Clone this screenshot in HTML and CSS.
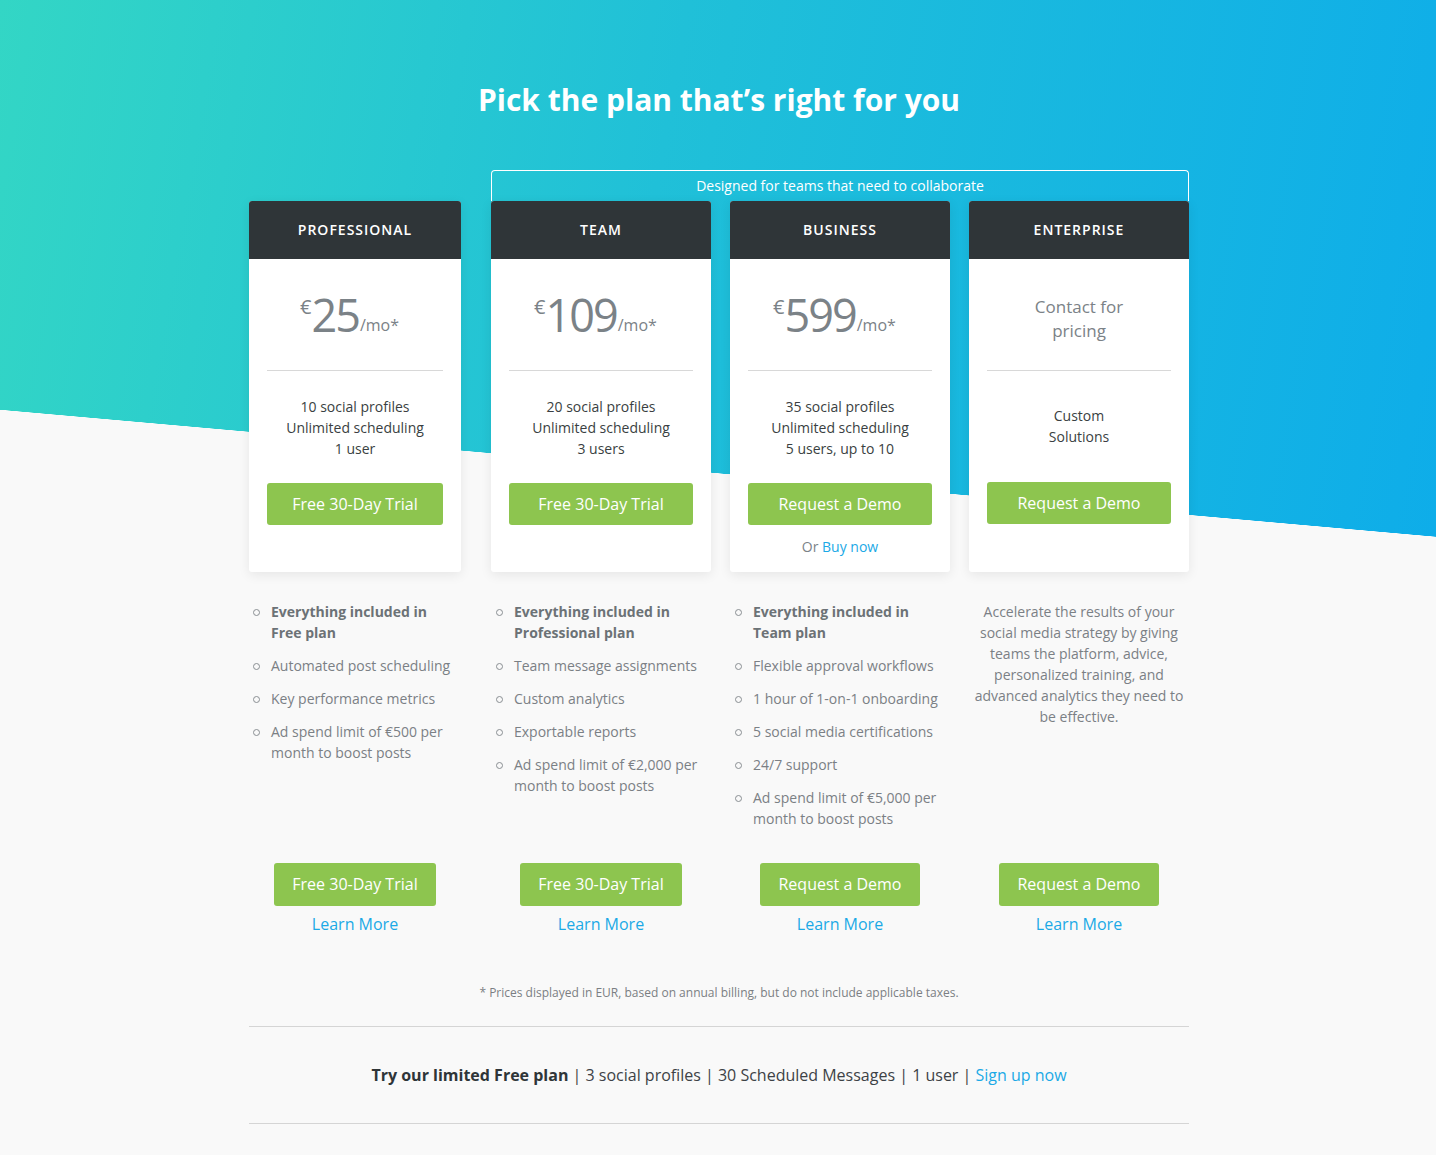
FILE: index.html
```html
<!DOCTYPE html>
<html lang="en">
<head>
<meta charset="utf-8">
<title>Pricing</title>
<link rel="stylesheet" href="styles.css">
</head>
<body>
<div class="page">
  <div class="container">
    <h1 class="title">Pick the plan that’s right for you</h1>

    <div class="plans">
      <div class="banner">Designed for teams that need to collaborate</div>

      <!-- Cards -->
      <div class="card col1">
        <div class="card-head">PROFESSIONAL</div>
        <div class="card-body">
          <div class="price"><span class="cur">€</span><span class="amt">25</span><span class="per">/mo*</span></div>
          <div class="summary">10 social profiles<br>Unlimited scheduling<br>1 user</div>
          <a class="btn btn-block">Free 30-Day Trial</a>
        </div>
      </div>
      <div class="card">
        <div class="card-head">TEAM</div>
        <div class="card-body">
          <div class="price"><span class="cur">€</span><span class="amt">109</span><span class="per">/mo*</span></div>
          <div class="summary">20 social profiles<br>Unlimited scheduling<br>3 users</div>
          <a class="btn btn-block">Free 30-Day Trial</a>
        </div>
      </div>
      <div class="card">
        <div class="card-head">BUSINESS</div>
        <div class="card-body">
          <div class="price"><span class="cur">€</span><span class="amt">599</span><span class="per">/mo*</span></div>
          <div class="summary">35 social profiles<br>Unlimited scheduling<br>5 users, up to 10</div>
          <a class="btn btn-block">Request a Demo</a>
          <div class="or">Or <a class="link">Buy now</a></div>
        </div>
      </div>
      <div class="card">
        <div class="card-head">ENTERPRISE</div>
        <div class="card-body">
          <div class="price contact">Contact for<br>pricing</div>
          <div class="summary summary-up">Custom<br>Solutions</div>
          <a class="btn btn-block btn-up">Request a Demo</a>
        </div>
      </div>

      <!-- Feature lists -->
      <ul class="features col1">
        <li class="strong">Everything included in Free plan</li>
        <li>Automated post scheduling</li>
        <li>Key performance metrics</li>
        <li>Ad spend limit of €500 per month to boost posts</li>
      </ul>
      <ul class="features">
        <li class="strong">Everything included in Professional plan</li>
        <li>Team message assignments</li>
        <li>Custom analytics</li>
        <li>Exportable reports</li>
        <li>Ad spend limit of €2,000 per month to boost posts</li>
      </ul>
      <ul class="features">
        <li class="strong">Everything included in Team plan</li>
        <li>Flexible approval workflows</li>
        <li>1 hour of 1-on-1 onboarding</li>
        <li>5 social media certifications</li>
        <li>24/7 support</li>
        <li>Ad spend limit of €5,000 per month to boost posts</li>
      </ul>
      <p class="enterprise-desc">Accelerate the results of your social media strategy by giving teams the platform, advice, personalized training, and advanced analytics they need to be effective.</p>

      <!-- Bottom CTAs -->
      <div class="cta col1"><a class="btn">Free 30-Day Trial</a><a class="learn">Learn More</a></div>
      <div class="cta"><a class="btn">Free 30-Day Trial</a><a class="learn">Learn More</a></div>
      <div class="cta"><a class="btn">Request a Demo</a><a class="learn">Learn More</a></div>
      <div class="cta"><a class="btn">Request a Demo</a><a class="learn">Learn More</a></div>
    </div>

    <p class="footnote">* Prices displayed in EUR, based on annual billing, but do not include applicable taxes.</p>

    <div class="free-plan">
      <strong>Try our limited Free plan</strong> | 3 social profiles | 30 Scheduled Messages | 1 user | <a class="link">Sign up now</a>
    </div>
  </div>
</div>
</body>
</html>
```

FILE: styles.css
```css
* { box-sizing: border-box; }

html, body {
  margin: 0;
  padding: 0;
}

body {
  font-family: "Open Sans", "Liberation Sans", Arial, sans-serif;
  color: #3a3f42;
  background: #f9f9f9;
}

.page {
  min-height: 1155px;
  padding-bottom: 40px;
  background:
    linear-gradient(to top right, #f9f9f9 50%, rgba(249, 249, 249, 0) 50.2%) 0 410px / 100% 127px no-repeat,
    linear-gradient(100deg, #33d6c5 0%, #20c0d8 45%, #0eade9 100%) 0 0 / 100% 537px no-repeat,
    #f9f9f9;
}

.container {
  width: 940px;
  margin: 0 auto;
  position: relative;
  left: 1px;
}

.title {
  margin: 0;
  padding-top: 81px;
  font-size: 30px;
  line-height: 38px;
  font-weight: 700;
  color: #fff;
  text-align: center;
}

.plans {
  margin-top: 51px;
  display: grid;
  grid-template-columns: 223px 220px 220px 220px;
  column-gap: 19px;
}

.col1 { width: 212px; }

.banner {
  grid-column: 2 / 5;
  grid-row: 1;
  height: 31px;
  border: 1px solid #fff;
  border-bottom: none;
  border-radius: 4px 4px 0 0;
  color: #fff;
  font-size: 14px;
  line-height: 30px;
  text-align: center;
}

.card {
  grid-row: 2;
  background: #fff;
  border-radius: 3px;
  box-shadow: 0 3px 12px rgba(0, 0, 0, 0.08);
  display: flex;
  flex-direction: column;
}

.card-head {
  height: 58px;
  background: #2f3538;
  color: #fff;
  border-radius: 3px 3px 0 0;
  font-size: 14px;
  font-weight: 600;
  letter-spacing: 1px;
  line-height: 58px;
  text-align: center;
}

.card-body {
  padding: 0 18px 15px;
  text-align: center;
}

.price {
  height: 112px;
  border-bottom: 1px solid #d8d8d8;
  display: flex;
  align-items: center;
  justify-content: center;
  color: #7b8287;
}

.price .cur {
  font-size: 20px;
  align-self: flex-start;
  margin-top: 38px;
  line-height: 20px;
  margin-right: 0;
}

.price .amt {
  font-size: 45px;
  letter-spacing: -2px;
  line-height: 46px;
  font-weight: 500;
}

.price .per {
  font-size: 16px;
  align-self: flex-end;
  margin-bottom: 37px;
  line-height: 16px;
  margin-left: 1px;
  margin-right: 11px;
}

.price.contact {
  font-size: 17px;
  line-height: 24px;
  padding-top: 8px;
  font-weight: 500;
}

.summary {
  height: 63px;
  margin: 25px 0 24px;
  display: flex;
  align-items: center;
  justify-content: center;
  font-size: 14px;
  line-height: 21px;
  color: #3a3f42;
}

.summary-up { padding-bottom: 3px; }

.btn {
  display: inline-block;
  height: 43px;
  padding: 0 18px;
  background: #8dc54f;
  color: #fff;
  border-radius: 3px;
  font-size: 16px;
  line-height: 43px;
  text-decoration: none;
  white-space: nowrap;
}

.btn-block {
  display: block;
  height: 42px;
  line-height: 42px;
  padding: 0;
}

.btn-up { margin-top: -1px; }

.or {
  margin-top: 11px;
  font-size: 14px;
  line-height: 21px;
  color: #7b8287;
}

.link {
  color: #1ba9e6;
  text-decoration: none;
}

.features {
  grid-row: 3;
  list-style: none;
  margin: 29px 0 0;
  padding: 0 0 34px 23px;
  font-size: 14px;
  line-height: 21px;
  color: #7b8085;
}

.features.col1 { padding-left: 22px; }

.features li {
  position: relative;
  margin-bottom: 12px;
}

.features li:last-child { margin-bottom: 0; }

.features li::before {
  content: "";
  position: absolute;
  left: -18px;
  top: 8px;
  width: 5px;
  height: 5px;
  border: 1px solid #8a8f93;
  border-radius: 50%;
}

.features li.strong {
  font-weight: 700;
  color: #6c7276;
}

.enterprise-desc {
  grid-row: 3;
  margin: 29px 0 0;
  padding: 0 3px;
  font-size: 14px;
  line-height: 21px;
  color: #7b8085;
  text-align: center;
}

.cta {
  grid-row: 4;
  display: flex;
  flex-direction: column;
  align-items: center;
}

.learn {
  margin-top: 7px;
  font-size: 16px;
  line-height: 22px;
  color: #1ba9e6;
  text-decoration: none;
}

.footnote {
  margin: 49px 0 0;
  font-size: 12px;
  line-height: 18px;
  color: #7b7f83;
  text-align: center;
}

.free-plan {
  margin-top: 24px;
  border-top: 1px solid #d5d5d5;
  border-bottom: 1px solid #d5d5d5;
  padding: 37px 0;
  font-size: 16px;
  line-height: 22px;
  color: #3d4246;
  text-align: center;
}

.free-plan strong {
  font-weight: 700;
  color: #2f3538;
}
```
